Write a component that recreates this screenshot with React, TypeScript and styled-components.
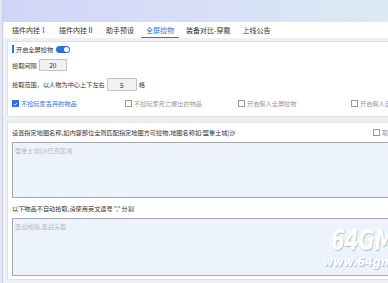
import * as React from "react";
import styled, { createGlobalStyle } from "styled-components";

const Global = createGlobalStyle`
  html, body {
    margin: 0;
    padding: 0;
    background: #eef0f5;
  }
  * {
    box-sizing: border-box;
  }
`;

const Page = styled.div`
  display: flex;
  width: 388px;
  height: 283px;
  overflow: hidden;
  font-family: "Noto Sans CJK SC", "Noto Sans", sans-serif;
  font-size: 6.2px;
  color: #333;
`;

const Rail = styled.div`
  flex: 0 0 3px;
  background: #e4e7f3;
  border-right: 1px solid #cdd1e0;
`;

const Main = styled.div`
  flex: 0 0 440px;
  display: flex;
  flex-direction: column;
`;

const Header = styled.div`
  height: 22px;
  background: linear-gradient(90deg, #d0d5f8 0%, #d8e1f6 50%, #dceff0 100%);
`;

const TabBar = styled.div`
  height: 16px;
  display: flex;
  align-items: stretch;
  background: #fff;
  padding-left: 3px;
  margin-left: 1px;
`;

const Tab = styled.div<{ $active?: boolean }>`
  display: flex;
  align-items: center;
  padding: 0 5px;
  margin-right: 2px;
  font-size: 7px;
  color: ${(p) => (p.$active ? "#2f6fe0" : "#333")};
  border-bottom: 1.5px solid ${(p) => (p.$active ? "#2f6fe0" : "transparent")};
  white-space: nowrap;
`;

const Content = styled.div`
  flex: 1;
  display: flex;
  flex-direction: column;
  gap: 5px;
  padding: 3px 0 0 4px;
`;

const Panel = styled.div<{ $h: number }>`
  position: relative;
  height: ${(p) => p.$h}px;
  background: #fff;
  border: 1px solid #e0e2ea;
  padding: 0 0 0 4px;
  display: flex;
  flex-direction: column;
`;

const Row = styled.div<{ $h: number }>`
  height: ${(p) => p.$h}px;
  display: flex;
  align-items: center;
  white-space: nowrap;
`;

const TitleMark = styled.span`
  width: 2px;
  height: 8px;
  background: #2f6fe0;
  margin-right: 2px;
`;

const Toggle = styled.span`
  position: relative;
  width: 14px;
  height: 7px;
  border-radius: 4px;
  background: #2f6fe0;
  margin-left: 3px;
  &::after {
    content: "";
    position: absolute;
    right: 1px;
    top: 1px;
    width: 5px;
    height: 5px;
    border-radius: 50%;
    background: #fff;
  }
`;

const NumBox = styled.span<{ $w: number; $h: number }>`
  display: inline-flex;
  align-items: center;
  justify-content: center;
  width: ${(p) => p.$w}px;
  height: ${(p) => p.$h}px;
  margin: 0 2px;
  background: #f1f1f1;
  border: 1px solid #c3c3c3;
  border-radius: 1px;
  font-size: 6.5px;
  color: #222;
`;

const Check = styled.span<{ $w: number; $on?: boolean }>`
  display: flex;
  flex: 0 0 ${(p) => p.$w}px;
  align-items: center;
  width: ${(p) => p.$w}px;
  color: ${(p) => (p.$on ? "#3a6fd8" : "#999")};
`;

const Box = styled.span<{ $on?: boolean }>`
  flex: 0 0 7px;
  width: 7px;
  height: 7px;
  margin-right: 2px;
  border: 1px solid ${(p) => (p.$on ? "#2f6fe0" : "#9a9a9a")};
  background: ${(p) => (p.$on ? "#2f6fe0" : "#fff")};
  display: inline-flex;
  align-items: center;
  justify-content: center;
`;

const Label = styled.div`
  display: flex;
  align-items: center;
  height: 19px;
  white-space: nowrap;
`;

const LabelText = styled.span`
  flex: 0 0 361px;
`;

const Area = styled.textarea<{ $h: number }>`
  height: ${(p) => p.$h}px;
  width: 428px;
  resize: none;
  background: #ecf3fd;
  border: 1px solid #a9a9ad;
  font-family: inherit;
  font-size: 6.2px;
  padding: 3px 2px;
  outline: none;
  &::placeholder {
    color: #b9bcc6;
  }
`;

const Watermark = styled.div`
  position: absolute;
  left: 315px;
  top: 104px;
  font-family: "DejaVu Sans Condensed", "DejaVu Sans", sans-serif;
  font-style: italic;
  font-weight: bold;
  color: #fff;
  text-shadow: 1px 1px 1px #b4b9c6;
  line-height: 1;
  white-space: nowrap;
  pointer-events: none;
`;

const WmBig = styled.div`
  font-size: 28px;
  transform: scaleX(0.78);
  transform-origin: left;
  margin-left: 8px;
`;

const WmSmall = styled.div`
  font-size: 13px;
  transform: scaleX(0.95);
  transform-origin: left;
`;

const Tick = () => (
  <svg width="6" height="6" viewBox="0 0 10 10">
    <path d="M2 5.2 L4.2 7.4 L8.2 2.8" stroke="#fff" strokeWidth="1.6" fill="none" />
  </svg>
);

const tabs = ["插件内挂Ⅰ", "插件内挂Ⅱ", "助手预设", "全屏捡物", "装备对比-穿戴", "上线公告"];

const options = [
  { text: "不捡玩家丢弃的物品", on: true },
  { text: "不捡玩家死亡爆出的物品", on: false },
  { text: "开启假人全屏捡物", on: false },
  { text: "开启假人自动捡物", on: false },
];

export default function App() {
  return (
    <>
      <Global />
      <Page>
        <Rail />
        <Main>
          <Header />
          <TabBar>
            {tabs.map((t) => (
              <Tab key={t} $active={t === "全屏捡物"}>
                {t}
              </Tab>
            ))}
          </TabBar>
          <Content>
            <Panel $h={76}>
              <Row $h={14}>
                <TitleMark />
                开启全屏捡物
                <Toggle />
              </Row>
              <Row $h={18}>
                拾取间隔
                <NumBox $w={28} $h={12}>20</NumBox>
              </Row>
              <Row $h={21}>
                拾取范围，以人物为中心上下左右
                <NumBox $w={30} $h={13}>5</NumBox>格
              </Row>
              <Row $h={17}>
                {options.map((o) => (
                  <Check key={o.text} $w={113} $on={o.on}>
                    <Box $on={o.on}>{o.on && <Tick />}</Box>
                    {o.text}
                  </Check>
                ))}
              </Row>
            </Panel>
            <Panel $h={158}>
              <Label>
                <LabelText>
                  设置指定地图名称,如内容部位全则匹配指定地图方可捡物,地图名称如:盟重土城|沙
                </LabelText>
                <Check $w={40}>
                  <Box />
                  取消
                </Check>
              </Label>
              <Area $h={56} placeholder="盟重土城|沙巴克区域" />
              <Row $h={20}>以下物品不自动拾取,请使用英文逗号 "," 分割</Row>
              <Area $h={58} placeholder="圣战戒指,圣战头盔" />
              <Watermark>
                <WmBig>64GM</WmBig>
                <WmSmall>www.64gm.com</WmSmall>
              </Watermark>
            </Panel>
          </Content>
        </Main>
      </Page>
    </>
  );
}
